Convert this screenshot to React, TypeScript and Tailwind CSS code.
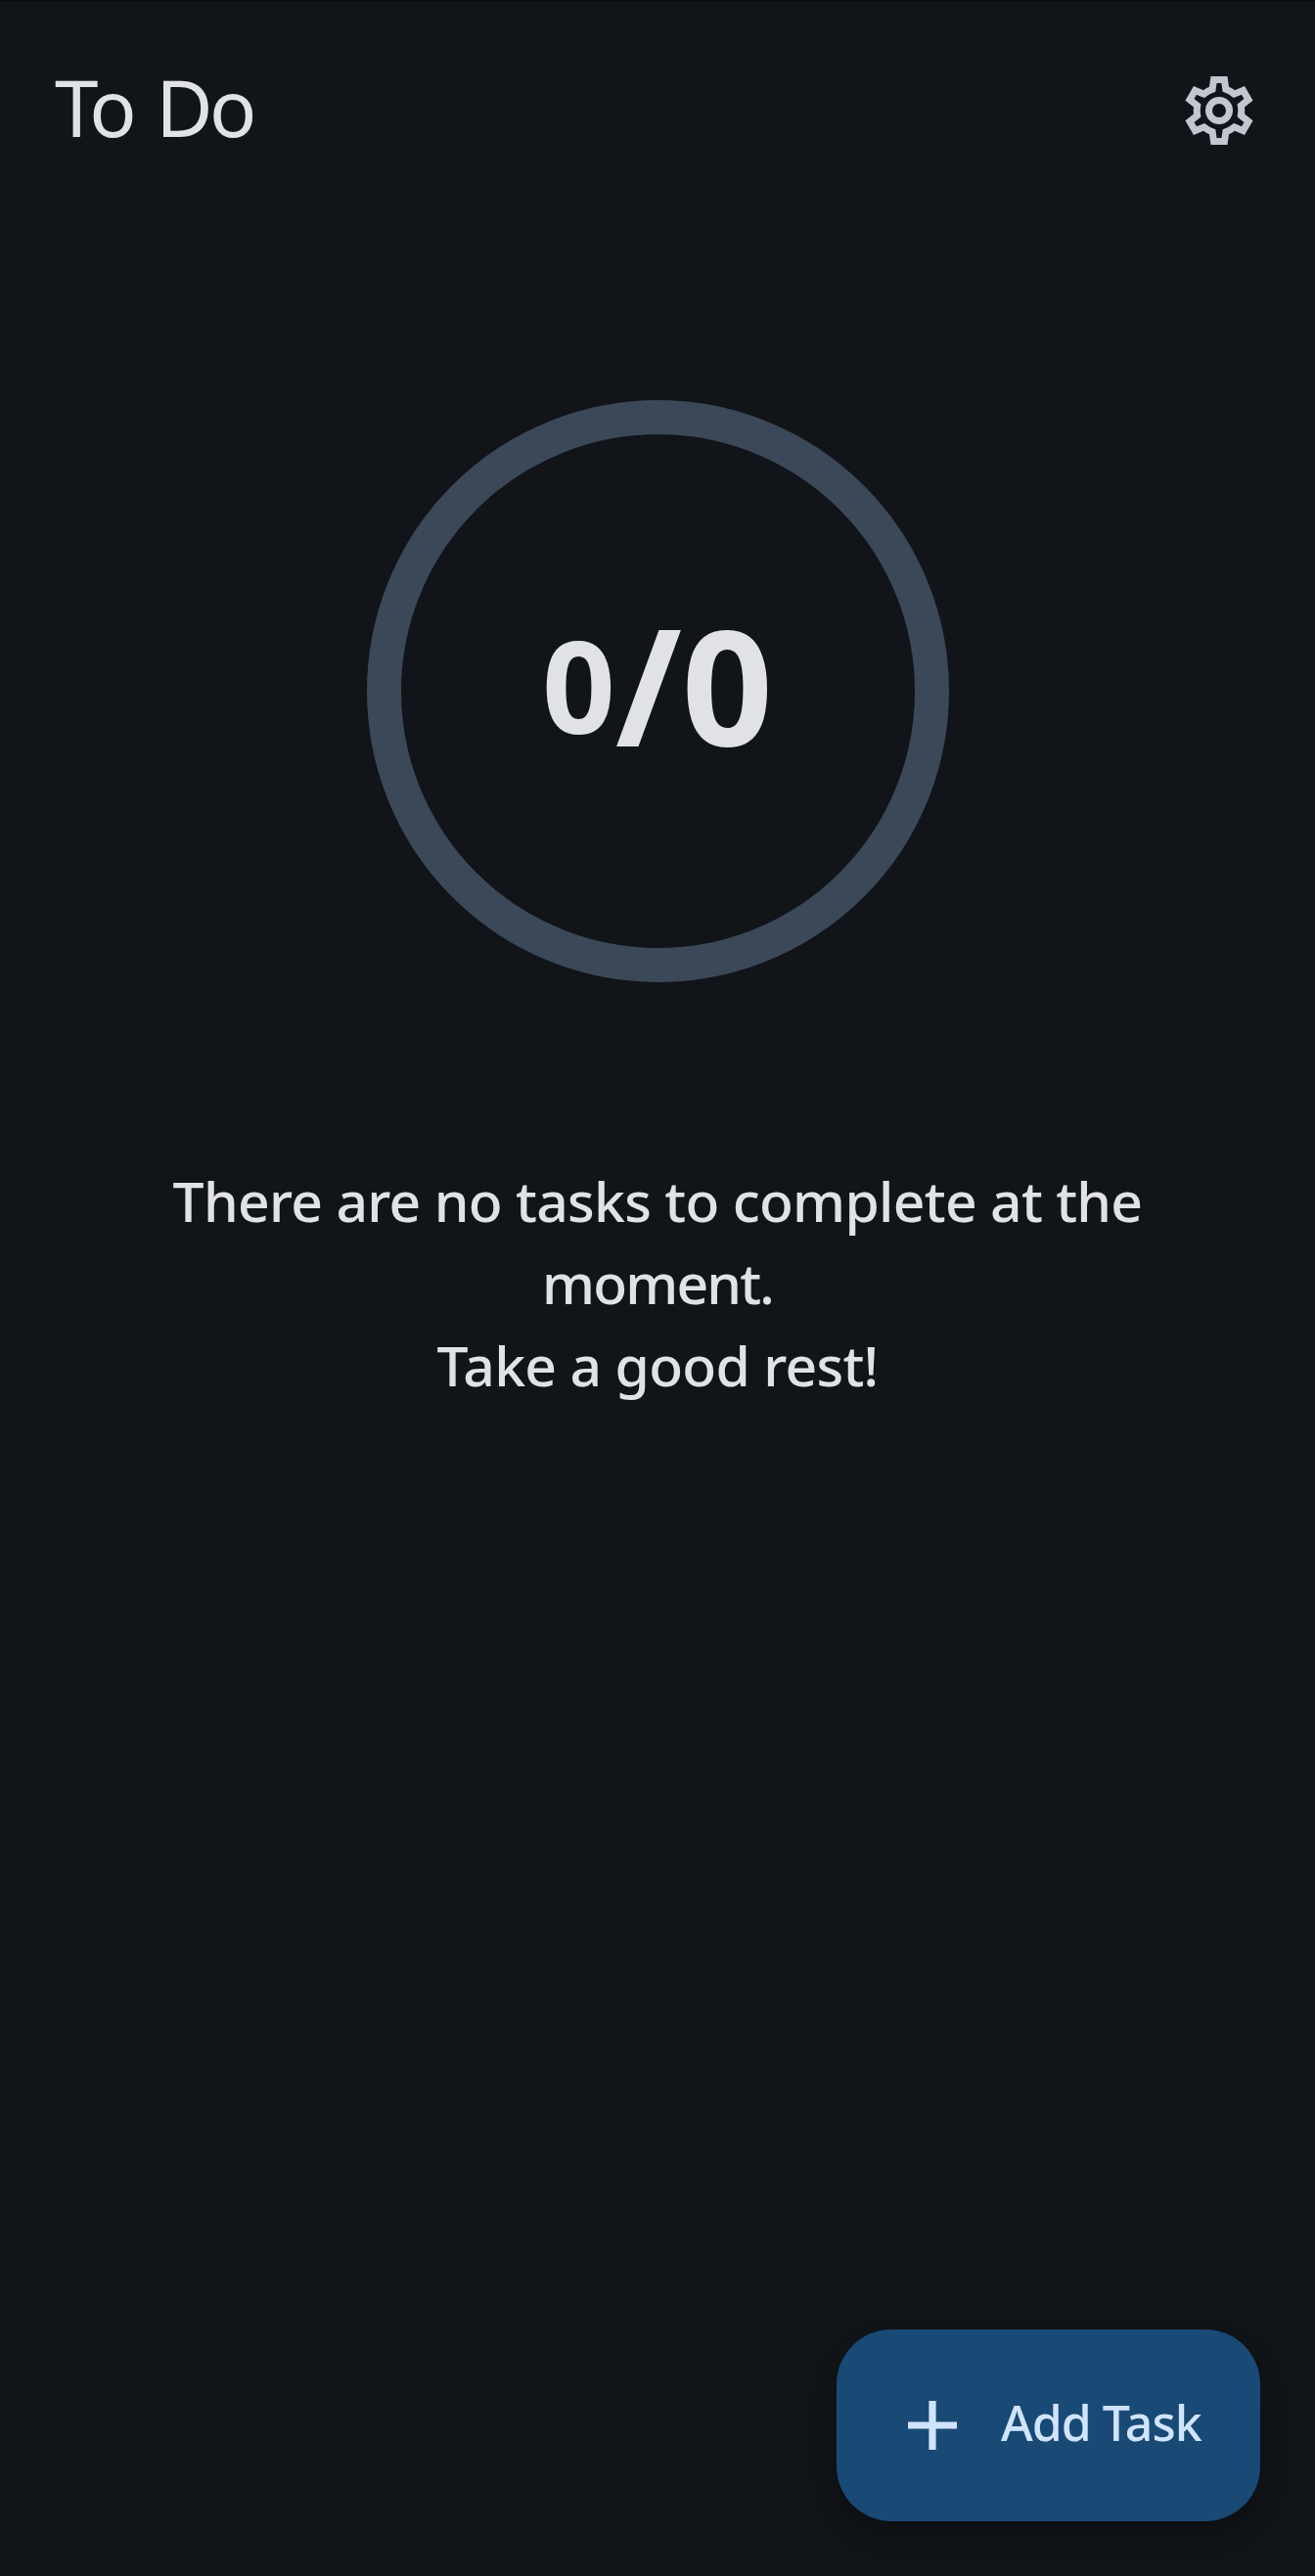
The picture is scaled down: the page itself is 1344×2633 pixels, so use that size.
function SettingsIcon() {
  return (
    <svg viewBox="0 0 24 24" className="size-[84px]" fill="#c3c6cf" aria-hidden="true">
      <path
        fillRule="evenodd"
        d="M19.43 12.98c.04-.32.07-.64.07-.98s-.03-.66-.07-.98l2.45-1.93-2.44-4.22-2.88 1.17c-.52-.41-1.09-.75-1.7-1L14.43 2H9.57l-.44 3.04c-.61.25-1.17.59-1.7 1L4.56 4.87 2.12 9.09l2.45 1.93c-.04.32-.07.65-.07.98s.03.66.07.98l-2.45 1.93 2.44 4.22 2.87-1.17c.53.41 1.09.75 1.7 1L9.57 22h4.86l.43-3.04c.61-.25 1.17-.59 1.7-1l2.88 1.17 2.44-4.22zM17.45 11.27c.04.31.05.52.05.73s-.02.43-.05.73l-.14 1.13.89.7 1.08.84-.7 1.21-1.27-.51-1.04-.42-.9.68c-.43.32-.84.56-1.25.73l-1.06.43-.16 1.13-.2 1.35h-1.4l-.19-1.35-.16-1.13-1.06-.43c-.43-.18-.83-.41-1.23-.71l-.91-.7-1.06.43-1.27.51-.7-1.21 1.08-.84.89-.7-.14-1.13c-.03-.31-.05-.54-.05-.74s.02-.43.05-.73l.14-1.13-.89-.7-1.08-.84.7-1.21 1.27.51 1.04.42.9-.68c.43-.32.84-.56 1.25-.73l1.06-.43.16-1.13.2-1.35h1.39l.19 1.35.16 1.13 1.06.43c.43.18.83.41 1.23.71l.91.7 1.06-.43 1.27-.51.7 1.21-1.07.85-.89.7z"
      />
      <path
        fillRule="evenodd"
        d="M12 8a4 4 0 1 0 0 8 4 4 0 0 0 0-8zm0 2a2 2 0 1 1 0 4 2 2 0 0 1 0-4z"
      />
    </svg>
  );
}

function Header() {
  return (
    <header className="flex h-[224px] items-center justify-between pr-14 pl-14">
      <h1 className="pb-2 text-[80px] leading-[112px] font-normal tracking-[-3.6px] [word-spacing:6px]">To Do</h1>
      <button type="button" aria-label="Settings">
        <SettingsIcon />
      </button>
    </header>
  );
}

function ProgressRing({ done, total }: { done: number; total: number }) {
  return (
    <div className="mt-[184px] flex size-[595px] items-center justify-center self-center rounded-full border-[35px] border-[#3b4858] pb-[15px] font-bold">
      <span className="text-[131px] leading-none">{done}</span>
      <span className="text-[163px] leading-none">/{total}</span>
    </div>
  );
}

function AddTaskButton() {
  return (
    <button
      type="button"
      className="mr-14 mb-14 flex h-[196px] w-[433px] items-center self-end rounded-[56px] bg-[#194975] pl-[73px] text-[#d1e4ff] shadow-[0_14px_28px_rgba(0,0,0,0.25)]"
    >
      <svg viewBox="0 0 50 50" className="size-[50px] shrink-0" fill="currentColor" aria-hidden="true">
        <path d="M21.4 0h7.2v21.4H50v7.2H28.6V50h-7.2V28.6H0v-7.2h21.4z" />
      </svg>
      <span className="ml-[45px] pb-1.5 text-[50px] leading-[70px] font-medium tracking-[-1px] whitespace-nowrap">
        Add Task
      </span>
    </button>
  );
}

export default function App() {
  return (
    <div className="flex h-[2633px] w-[1344px] flex-col border-t border-[#0a0d10] bg-[#111418] font-['Noto_Sans',sans-serif] text-[#e1e2e8]">
      <Header />
      <main className="flex flex-1 flex-col">
        <ProgressRing done={0} total={0} />
        <div className="mt-[181px] text-center text-[57px] leading-[84px] font-medium whitespace-nowrap">
          <p className="tracking-[-0.7px]">There are no tasks to complete at the</p>
          <p className="tracking-[-1.8px]">moment.</p>
          <p className="tracking-[-0.7px]">Take a good rest!</p>
        </div>
      </main>
      <AddTaskButton />
    </div>
  );
}
